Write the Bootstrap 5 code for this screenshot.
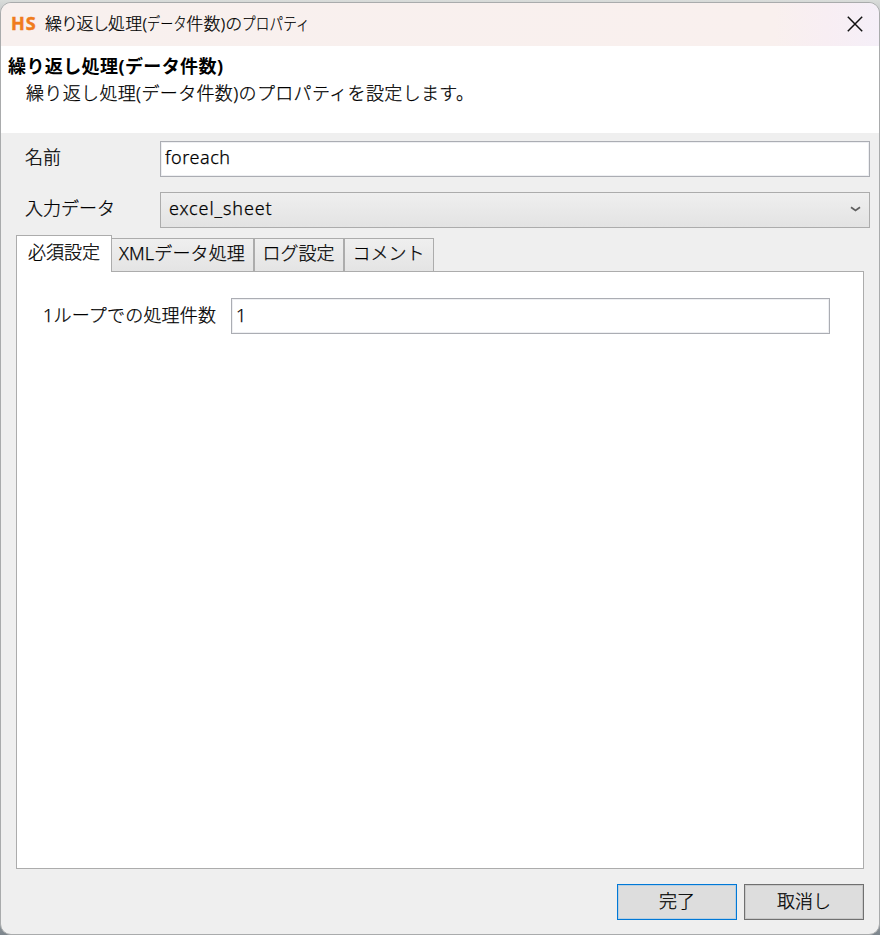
<!DOCTYPE html>
<html lang="ja">
<head>
<meta charset="utf-8">
<title>繰り返し処理(データ件数)のプロパティ</title>
<link href="https://cdn.jsdelivr.net/npm/bootstrap@5.3.0/dist/css/bootstrap.min.css" rel="stylesheet">
<style>
body{width:880px;height:935px;overflow:hidden;background:linear-gradient(#d9dcda 0,#c8cacb 12px,#b2b3b5 60%,#b8bbbd 96%,#7c858c);padding:2px 0 0;font:18px/24px "Noto Sans","Noto Sans CJK JP",sans-serif;color:#000}
.window{height:933px;border:1px solid #a9abac;border-radius:11px;background:#efefef;overflow:hidden}
.titlebar{height:43px;background:linear-gradient(90deg,#f8f0ee 0,#f9f0ee 88%,#f8eef3 94%,#f5eff8);padding:0 16px 2px 10px}
.brand{font:700 18px/24px "Open Sans",sans-serif;color:#f07c1c;width:34px;letter-spacing:.9px;padding-bottom:1px;-webkit-text-stroke:.5px #f07c1c}
.caption-text{font:300 17px/24px "Noto Sans","Noto Sans CJK JP",sans-serif;white-space:nowrap;font-feature-settings:"palt";letter-spacing:.15px;-webkit-text-stroke:.2px #000}
.kana{display:inline-block;transform-origin:0 50%;font-feature-settings:normal}
.kana-data{width:39px;transform:scaleX(.77)}
.kana-property{width:66px;transform:scaleX(.8)}
.jp{font-family:"Noto Sans","Noto Sans CJK JP",sans-serif;font-weight:300;white-space:nowrap;-webkit-text-stroke:.25px #000}
.intro{height:87px;padding:8px 7px 0}
.intro strong{display:block;font-size:18px;font-weight:700;line-height:25px;letter-spacing:.4px}
.intro div{padding-left:18px;line-height:28px;letter-spacing:.35px}
.fields{padding:8px 9px 0 24px}
.fields label{width:135px;line-height:32px}
.field-row{height:36px}
.form-control,.form-select{height:36px;border:1px solid #abadb3;border-radius:0;color:#000;font-size:18px;line-height:24px;box-shadow:inset 0 0 0 1px #eeeff2;font-family:"Noto Sans",sans-serif;font-weight:300;letter-spacing:.55px;-webkit-text-stroke:.25px #000}
.form-control{padding:1px 4px 4px}
#name{padding:1px 4px 5px}
.form-select{background:linear-gradient(#efefef,#e3e3e3);border-color:#acacac;padding:3px 8px 4px;box-shadow:none;letter-spacing:.9px}
.tabs-area{padding:7px 15px 0}
.nav-tabs{border:0;height:36px;align-items:flex-end}
.nav-tabs .nav-link{height:33px;margin:0;border:1px solid #acacac;border-bottom:0;border-radius:0;background:linear-gradient(#efefef,#e4e4e4);padding:2px 1px 0 0;color:#000;line-height:24px;text-align:center}
.nav-tabs .nav-link.active{width:96px;height:37px;margin-bottom:-1px;position:relative;z-index:1;background:#fff;padding:4px 0 0;border-color:#acacac;color:#000}
.nav-tabs .tab-xml{width:142px;border-left:0;letter-spacing:.15px}.tab-log,.tab-comment{width:90px}
.panel{height:598px;border:1px solid #acacac;background:#fff;padding:26px 33px 0 26px}
.panel label{width:188px;line-height:34px;letter-spacing:.2px}
.actions{padding:15px 15px 0;gap:7px}
.btn-win{width:120px;height:36px;border:1px solid #707070;border-radius:0;background:#ddd;font-size:18px;line-height:24px;padding:0 0 2px;color:#000;box-shadow:inset 0 0 0 1px #c8c8c8}
.btn-main{border-color:#0078d7;box-shadow:inset 0 0 0 1px #b9cfe0}
</style>
</head>
<body>
<main class="window d-flex flex-column">
 <header class="titlebar d-flex align-items-center flex-shrink-0">
  <span class="brand">HS</span>
  <span class="caption-text">繰り返し処理(<span class="kana kana-data">データ</span>件数)の<span class="kana kana-property">プロパティ</span></span>
  <svg class="ms-auto" width="16" height="16" viewBox="0 0 16 16" role="img" aria-label="閉じる"><path d="M.8.8 15.2 15.2M15.2.8.8 15.2" stroke="#111" stroke-width="1.5"/></svg>
 </header>
 <section class="intro bg-white flex-shrink-0">
  <strong>繰り返し処理(データ件数)</strong>
  <div class="jp">繰り返し処理(データ件数)のプロパティを設定します。</div>
 </section>
 <section class="fields">
  <div class="field-row d-flex mb-3">
   <label class="jp flex-shrink-0" for="name">名前</label>
   <input class="form-control" id="name" value="foreach">
  </div>
  <div class="field-row d-flex" style="margin-top:-1px">
   <label class="jp flex-shrink-0">入力データ</label>
   <div class="form-select d-flex justify-content-between">
    <span>excel_sheet</span>
    <svg width="11" height="6" viewBox="0 0 11 6" style="margin-top:10px"><path d="M1 1.2 5.5 4.4 10 1.2" fill="none" stroke="#606060" stroke-width="1.8"/></svg>
   </div>
  </div>
 </section>
 <section class="tabs-area">
  <nav class="nav nav-tabs">
   <a class="nav-link active jp">必須設定</a>
   <a class="nav-link tab-xml jp">XMLデータ処理</a>
   <a class="nav-link tab-log jp">ログ設定</a>
   <a class="nav-link tab-comment jp">コメント</a>
  </nav>
  <div class="panel">
   <div class="d-flex">
    <label class="jp flex-shrink-0" for="count">1ループでの処理件数</label>
    <input class="form-control" id="count" value="1">
   </div>
  </div>
 </section>
 <footer class="actions d-flex justify-content-end">
  <button class="btn btn-win btn-main jp">完了</button>
  <button class="btn btn-win jp">取消し</button>
 </footer>
</main>
<script src="https://cdn.jsdelivr.net/npm/bootstrap@5.3.0/dist/js/bootstrap.bundle.min.js"></script>
</body>
</html>
